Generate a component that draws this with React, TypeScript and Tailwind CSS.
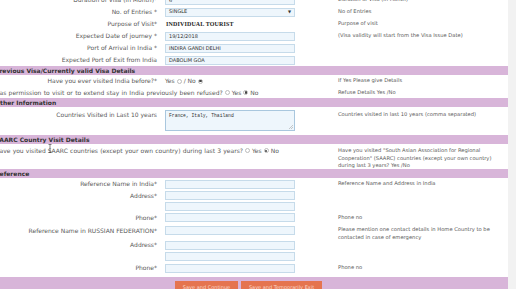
import type { ReactNode } from 'react';

function Field({ value = '' }: { value?: string }) {
  return (
    <div className="h-[9px] w-[130px] truncate border border-[#c6dbea] bg-[#eef6fc] px-[3px] text-[5px] leading-[7px] text-[#333]">
      {value}
    </div>
  );
}

function Radio({ checked = false }: { checked?: boolean }) {
  return (
    <span className="mx-[2px] inline-flex h-[5px] w-[5px] items-center justify-center rounded-full border border-[#bbb] bg-white">
      {checked && <span className="h-[2.5px] w-[2.5px] rounded-full bg-[#444]" />}
    </span>
  );
}

function Header({ children }: { children: ReactNode }) {
  return (
    <div className="h-[9px] bg-[#d8b5d9] pl-[3px] text-[6px] font-bold leading-[9px] text-[#333]">
      {children}
    </div>
  );
}

function Row({
  label,
  help,
  children,
  height = 'h-[12px]',
}: {
  label: ReactNode;
  help?: ReactNode;
  children?: ReactNode;
  height?: string;
}) {
  return (
    <div className={`flex items-center ${height}`}>
      <div className="w-[173px] shrink-0 pr-[8px] text-right">{label}</div>
      <div className="w-[173px] shrink-0">{children}</div>
      <div className="flex-1 text-[5.2px] whitespace-nowrap">{help}</div>
    </div>
  );
}

export default function App() {
  return (
    <div className="flex h-[289px] w-[516px] overflow-hidden bg-white font-['DejaVu_Sans',Verdana,sans-serif] text-[6px] leading-[7.5px] text-[#5a5a5a]">
      <div className="w-[508px] shrink-0 overflow-hidden">
        <div className="-mt-[6px] -ml-[8px] w-[516px]">
          {/* Visa details */}
          <Row label="Duration of Visa (in Month)*" help="Duration of Visa (in Month)">
            <Field value="6" />
          </Row>
          <Row label="No. of Entries *" help="No of Entries">
            <div className="flex h-[9px] w-[130px] items-center justify-between border border-[#c6dbea] bg-[#eef6fc] px-[3px] text-[5px] text-[#333]">
              <span>SINGLE</span>
              <span className="text-[4px]">▼</span>
            </div>
          </Row>
          <Row label="Purpose of Visit*" help="Purpose of visit">
            <span className="pl-[1px] font-['Liberation_Serif',serif] text-[6px] font-bold tracking-[0.15px] text-[#222]">
              INDIVIDUAL TOURIST
            </span>
          </Row>
          <Row label="Expected Date of journey *" help="(Visa validity will start from the Visa Issue Date)">
            <Field value="19/12/2018" />
          </Row>
          <Row label="Port of Arrival in India *">
            <Field value="INDIRA GANDI DELHI" />
          </Row>
          <Row label="Expected Port of Exit from India">
            <Field value="DABOLIM GOA" />
          </Row>

          {/* Previous visa */}
          <Header>Previous Visa/Currently valid Visa Details</Header>
          <Row label="Have you ever visited India before?*" help="If Yes Please give Details">
            <div className="flex items-center">
              Yes <Radio /> / No <Radio checked />
            </div>
          </Row>
          <div className="flex h-[11px] items-center">
            <div className="flex w-[346px] shrink-0 items-center whitespace-nowrap pl-[3px] [word-spacing:0.4px]">
              Has permission to visit or to extend stay in India previously been refused?
              <Radio /> Yes <Radio checked /> No
            </div>
            <div className="flex-1 text-[5.2px]">Refuse Details Yes /No</div>
          </div>

          {/* Other information */}
          <Header>Other Information</Header>
          <div className="flex h-[28px] items-start pt-[3px]">
            <div className="w-[173px] shrink-0 pt-[1px] pr-[8px] text-right">Countries Visited in Last 10 years</div>
            <div className="w-[173px] shrink-0">
              <div className="relative h-[21px] w-[130px] border border-[#a9c7de] bg-[#eef6fc] px-[3px] pt-[2px] font-['Liberation_Mono',monospace] text-[4.7px] leading-[6px] text-[#333]">
                France, Italy, Thailand
                <svg className="absolute right-[1px] bottom-[1px]" width="4" height="4" viewBox="0 0 4 4">
                  <path d="M4 0L0 4M4 2L2 4" stroke="#999" strokeWidth="0.5" />
                </svg>
              </div>
            </div>
            <div className="flex-1 pt-[1px] text-[5.2px] whitespace-nowrap">
              Countries visited in last 10 years (comma separated)
            </div>
          </div>

          {/* SAARC */}
          <Header>SAARC Country Visit Details</Header>
          <div className="flex h-[25px] items-start pt-[3px]">
            <div className="flex h-[7.5px] w-[346px] shrink-0 items-center whitespace-nowrap pl-[3px] [word-spacing:0.3px]">
              Have you visited{' '}
              <span className="relative ml-[1.9px]">
                S
                <svg className="absolute -top-[3px] left-[0px]" width="4" height="9" viewBox="0 0 4 9">
                  <path d="M0.5 0.5h3M2 0.5v8M0.5 8.5h3" stroke="#333" strokeWidth="0.6" fill="none" />
                </svg>
              </span>
              AARC countries (except your own country) during last 3 years?
              <Radio /> Yes <Radio checked /> No
            </div>
            <div className="flex-1 text-[5.2px] whitespace-nowrap">
              Have you visited "South Asian Association for Regional
              <br />
              Cooperation" (SAARC) countries (except your own country)
              <br />
              during last 3 years? Yes /No
            </div>
          </div>

          {/* Reference */}
          <Header>Reference</Header>
          <Row label="Reference Name in India*" help="Reference Name and Address in India">
            <Field />
          </Row>
          <Row label="Address*" height="h-[11px]">
            <Field />
          </Row>
          <Row label="" height="h-[11px]">
            <Field />
          </Row>
          <Row label="Phone*" help="Phone no" height="h-[11px]">
            <Field />
          </Row>
          <div className="flex h-[16px] items-start pt-[3px]">
            <div className="w-[173px] shrink-0 pt-[1px] pr-[8px] text-right">Reference Name in RUSSIAN FEDERATION*</div>
            <div className="w-[173px] shrink-0">
              <Field />
            </div>
            <div className="flex-1 text-[5.2px] whitespace-nowrap">
              Please mention one contact details in Home Country to be
              <br />
              contacted in case of emergency
            </div>
          </div>
          <Row label="Address*">
            <Field />
          </Row>
          <Row label="" height="h-[11px]">
            <Field />
          </Row>
          <Row label="Phone*" help="Phone no">
            <Field />
          </Row>

          {/* Footer */}
          <div className="mt-[3px] flex h-[20px] items-start gap-[3px] bg-[#d8b5d9] pt-[4px] pl-[183px]">
            <button className="h-[12px] w-[63px] bg-[#e5744f] text-[5px] leading-[12px] text-[#fbd9cc]">
              Save and Continue
            </button>
            <button className="h-[12px] w-[81px] bg-[#e5744f] text-[5px] leading-[12px] text-[#fbd9cc]">
              Save and Temporarily Exit
            </button>
          </div>
        </div>
      </div>
      <div className="flex-1 bg-[#f2f2f2]" />
    </div>
  );
}
